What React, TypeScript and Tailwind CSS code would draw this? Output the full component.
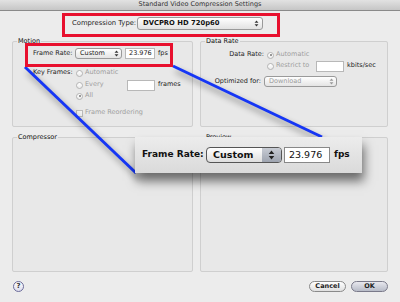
type PopupProps = {
  label: string
  width: string
  bold?: boolean
  dim?: boolean
}

function Arrows({ className }: { className?: string }) {
  return (
    <svg viewBox="0 0 6 9" className={className}>
      <path d="M3 0.5 L5.5 3.5 L0.5 3.5 Z M3 8.5 L5.5 5.5 L0.5 5.5 Z" fill="currentColor" />
    </svg>
  )
}

function Popup({ label, width, bold, dim }: PopupProps) {
  return (
    <div
      className={`flex h-[11px] items-center justify-between rounded-[3px] border border-[#9a9a9a] bg-gradient-to-b from-white to-[#e4e4e4] pl-[4px] pr-[2px] ${width}`}
    >
      <span className={`${bold ? 'font-bold text-[#111]' : ''} ${dim ? 'text-[#9a9a9a]' : 'text-[#222]'}`}>
        {label}
      </span>
      <Arrows className={`h-[7px] w-[5px] ${dim ? 'text-[#999]' : 'text-[#333]'}`} />
    </div>
  )
}

function Radio({ checked, dim }: { checked?: boolean; dim?: boolean }) {
  return (
    <span
      className={`flex h-[7px] w-[7px] items-center justify-center rounded-full border ${dim ? 'border-[#b4b4b4]' : 'border-[#888]'} bg-gradient-to-b from-white to-[#ececec]`}
    >
      {checked && <span className="h-[2px] w-[2px] rounded-full bg-[#777]" />}
    </span>
  )
}

function Field({ value, width }: { value?: string; width: string }) {
  return (
    <div className={`flex h-[11px] items-center border border-[#b8b8b8] bg-white px-[3px] text-[#222] ${width}`}>
      {value}
    </div>
  )
}

function Group({ title, children }: { title: string; children?: React.ReactNode }) {
  return (
    <fieldset className="rounded-[2px] border border-[#cfcfcf] bg-[#e8e8e8] px-0">
      <legend className="ml-[4px] px-[1px] leading-[10px] text-[#111]">{title}</legend>
      {children}
    </fieldset>
  )
}

export default function App() {
  return (
    <div
      className="relative h-[302px] w-[400px] overflow-hidden bg-[#ececec] text-[6.5px] text-[#222]"
      style={{ fontFamily: '"DejaVu Sans", "Liberation Sans", sans-serif' }}
    >
      {/* title bar */}
      <div className="flex h-[11px] items-center justify-center border-b border-[#8a8a8a] bg-gradient-to-b from-[#e2e2e2] to-[#c6c6c6] text-[#333]">
        Standard Video Compression Settings
      </div>

      {/* compression type */}
      <div className="mt-[6px] flex h-[13px] items-center pl-[72px]">
        <span className="w-[65px] text-[6.8px]">Compression Type:</span>
        <div className="flex h-[13px] w-[126px] items-center justify-between rounded-[3px] border border-[#9a9a9a] bg-gradient-to-b from-white to-[#e2e2e2] pl-[5px] pr-[3px]">
          <span className="text-[6.8px] font-bold text-[#111]">DVCPRO HD 720p60</span>
          <Arrows className="h-[7px] w-[5px] text-[#333]" />
        </div>
      </div>

      {/* group boxes */}
      <div className="mt-[6px] grid grid-cols-[181px_188px] grid-rows-[91px_140px] gap-x-[7px] gap-y-[5px] pl-[12px]">
        <Group title="Motion">
          <div className="flex flex-col pl-[20px]">
            <div className="mt-[2px] flex h-[11px] items-center">
              <span className="w-[42px]">Frame Rate:</span>
              <Popup label="Custom" width="w-[47px]" />
              <div className="ml-[3px]">
                <Field value="23.976" width="w-[30px]" />
              </div>
              <span className="ml-[3px]">fps</span>
            </div>
            <div className="mt-[9px] flex h-[10px] items-center">
              <span className="w-[43px]">Key Frames:</span>
              <Radio dim />
              <span className="ml-[2px] text-[#9e9e9e]">Automatic</span>
            </div>
            <div className="mt-[1px] flex h-[12px] items-center pl-[43px]">
              <Radio dim />
              <span className="ml-[2px] w-[42px] text-[#9e9e9e]">Every</span>
              <Field width="w-[28px]" />
              <span className="ml-[3px]">frames</span>
            </div>
            <div className="flex h-[10px] items-center pl-[43px]">
              <Radio checked dim />
              <span className="ml-[2px] text-[#9e9e9e]">All</span>
            </div>
            <div className="mt-[7px] flex h-[10px] items-center pl-[43px]">
              <span className="h-[7px] w-[7px] border border-[#bbb] bg-[#f4f4f4]" />
              <span className="ml-[2px] text-[#9e9e9e]">Frame Reordering</span>
            </div>
          </div>
        </Group>

        <Group title="Data Rate">
          <div className="flex flex-col">
            <div className="mt-[4px] flex h-[10px] items-center">
              <span className="w-[66px] pr-[3px] text-right">Data Rate:</span>
              <Radio checked dim />
              <span className="ml-[2px] text-[#9e9e9e]">Automatic</span>
            </div>
            <div className="flex h-[12px] items-center pl-[66px]">
              <Radio dim />
              <span className="ml-[2px] w-[40px] text-[#9e9e9e]">Restrict to</span>
              <Field width="w-[28px]" />
              <span className="ml-[3px]">kbits/sec</span>
            </div>
            <div className="mt-[4px] flex h-[11px] items-center">
              <span className="w-[63px] pr-[3px] text-right">Optimized for:</span>
              <Popup label="Download" width="w-[73px]" dim />
            </div>
          </div>
        </Group>

        <Group title="Compressor" />
        <Group title="Preview" />
      </div>

      {/* bottom buttons */}
      <div className="mt-[9px] flex h-[11px] items-center pl-[13px] pr-[12px]">
        <span className="flex h-[11px] w-[11px] items-center justify-center rounded-full border border-[#6b6b9a] bg-gradient-to-b from-white to-[#dcdcec] text-[7px] font-bold text-[#333]">
          ?
        </span>
        <div className="ml-auto flex gap-[5px]">
          <span className="flex h-[11px] w-[37px] items-center justify-center rounded-full border border-[#8a8a8a] bg-gradient-to-b from-white to-[#e0e0e0] text-[6.5px] font-bold text-[#222]">
            Cancel
          </span>
          <span className="flex h-[11px] w-[37px] items-center justify-center rounded-full border border-[#7a7a8a] bg-gradient-to-b from-[#e8e8ee] to-[#b8bcc8] text-[6.5px] font-bold text-[#222]">
            OK
          </span>
        </div>
      </div>

      {/* annotation lines */}
      <svg
        className="absolute left-0 top-0 h-[302px] w-[400px]"
        viewBox="0 0 400 302"
        style={{ filter: 'drop-shadow(3px 5px 3px rgba(0,0,0,0.45))' }}
      >
        <line x1="25" y1="67" x2="136" y2="173" stroke="#1636f5" strokeWidth="3" />
        <line x1="173" y1="66" x2="322" y2="137" stroke="#1636f5" strokeWidth="3" />
      </svg>

      {/* red highlight boxes */}
      <div className="absolute left-[62px] top-[13px] h-[24px] w-[218px] border-[3px] border-[#e8102e]" />
      <div className="absolute left-[25px] top-[43px] h-[24px] w-[148px] border-[3px] border-[#e8102e]" />

      {/* magnified callout */}
      <div className="absolute left-[135px] top-[137px] flex h-[36px] w-[227px] items-center bg-gradient-to-b from-[#ececec] to-[#dadada] pl-[7px] text-[9px] font-bold text-[#111] shadow-[2px_8px_10px_rgba(0,0,0,0.55)]">
        <span className="w-[64px]">Frame Rate:</span>
        <div className="flex h-[16px] w-[76px] items-center justify-between rounded-[4px] border border-[#555] bg-gradient-to-b from-white to-[#dedede] pl-[6px] text-[9.5px]">
          <span>Custom</span>
          <span className="flex h-full w-[19px] items-center justify-center rounded-r-[3px] bg-gradient-to-b from-[#c8ccd4] to-[#9ea4b0]">
            <Arrows className="h-[10px] w-[7px] text-[#222]" />
          </span>
        </div>
        <div className="ml-[2px] flex h-[16px] w-[46px] items-center border border-[#888] bg-white pl-[4px] text-[9.5px] font-normal text-[#111]">
          23.976
        </div>
        <span className="ml-[4px]">fps</span>
      </div>
    </div>
  )
}
